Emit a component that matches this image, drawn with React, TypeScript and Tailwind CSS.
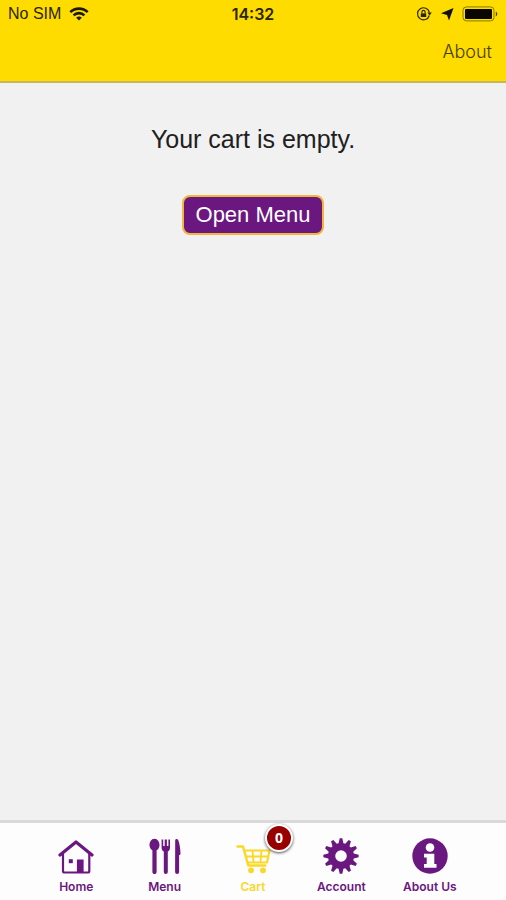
import React from "react";

const PURPLE = "#6a1780";

function gearPath(teeth: number, outer: number, inner: number) {
  const points: string[] = [];
  const step = (Math.PI * 2) / teeth;
  const at = (radius: number, angle: number) =>
    `${(18 + radius * Math.sin(angle)).toFixed(2)} ${(18 - radius * Math.cos(angle)).toFixed(2)}`;
  for (let i = 0; i < teeth; i++) {
    const a = i * step;
    points.push(at(inner, a - step * 0.36));
    points.push(at(outer, a - step * 0.14));
    points.push(at(outer, a + step * 0.14));
    points.push(at(inner, a + step * 0.36));
  }
  return `M${points.join("L")}ZM18 12.200a5.800 5.800 0 1 0 0 11.600a5.800 5.800 0 1 0 0-11.600Z`;
}

function HomeIcon() {
  return (
    <svg className="size-9" viewBox="0 0 36 36" fill="none" stroke={PURPLE} aria-hidden="true">
      <path d="M2 17 18 4 34 17" strokeWidth="3.2" strokeLinecap="round" strokeLinejoin="round" />
      <path d="M5 16V33a1.500 1.500 0 0 0 1.500 1.500H29.800a1.500 1.500 0 0 0 1.500-1.500V16" strokeWidth="2.200" />
      <path d="M19.500 34V22h5.500v12Z" fill={PURPLE} strokeWidth="1.200" />
      <path d="M10.800 21.200h4v4h-4Z" fill={PURPLE} stroke="none" />
    </svg>
  );
}

function MenuIcon() {
  return (
    <svg className="size-9" viewBox="0 0 36 36" fill={PURPLE} aria-hidden="true">
      <path d="M7.500 .8c3.200 0 5 3.200 5 6.200 0 2.500-1.200 4.300-2.900 5.300V34a2.100 2.100 0 0 1-4.200 0V12.300C3.700 11.300 2.500 9.500 2.500 7 2.500 4 4.300 .8 7.500 .8Z" />
      <path d="M14.600 1.500h1.600V8h1.500V1.500h1.200V1.500h1V8h1.500V1.500h1.600V9.700c0 2-1 3.200-2.200 3.800V34a2 2 0 0 1-4 0V13.500c-1.200-.6-2.200-1.800-2.200-3.800Z" />
      <path d="M28.200 1.800c.7-1.300 2.400-1.200 3 .2 1.300 3.300 2.200 9 2.300 13.400 0 1-.6 1.600-1.400 1.800V34a2 2 0 0 1-4 0Z" />
    </svg>
  );
}

function CartIcon() {
  return (
    <svg className="size-9" viewBox="0 0 36 36" fill="none" stroke="#fbd824" aria-hidden="true">
      <path d="M2.500 8.500h5.500L13.300 27.500h17" strokeWidth="2.400" strokeLinecap="round" strokeLinejoin="round" />
      <path d="M9 12.500h25.500l-2.500 12H12.500" strokeWidth="2.200" strokeLinejoin="round" />
      <path d="M10.500 18.500h22.500M17.500 12.500l1 12M26.500 12.500l-1 12" strokeWidth="1.800" />
      <circle cx="16" cy="32.300" r="2.900" fill="#fbd824" stroke="none" />
      <circle cx="28" cy="32.300" r="2.900" fill="#fbd824" stroke="none" />
    </svg>
  );
}

function AccountIcon() {
  return (
    <svg className="size-9" viewBox="0 0 36 36" aria-hidden="true">
      <path d={gearPath(12, 17.7, 13)} fill={PURPLE} fillRule="evenodd" />
    </svg>
  );
}

function AboutIcon() {
  return (
    <svg className="size-9" viewBox="0 0 36 36" aria-hidden="true">
      <circle cx="18" cy="18" r="17.700" fill={PURPLE} />
      <circle cx="18" cy="9.500" r="4.300" fill="#fff" />
      <path d="M12 15.800h10.300V26H24.500v3.800H12V26h2.700v-6.400H12Z" fill="#fff" />
    </svg>
  );
}

const tabs = [
  { label: "Home", Icon: HomeIcon },
  { label: "Menu", Icon: MenuIcon },
  { label: "Cart", Icon: CartIcon, active: true, badge: 0 },
  { label: "Account", Icon: AccountIcon },
  { label: "About Us", Icon: AboutIcon },
];

function StatusBar() {
  return (
    <div className="grid h-7 grid-cols-3 items-center px-2 text-[16px] leading-7 text-[#2b2500]">
      <div className="flex items-center gap-2">
        <span>No SIM</span>
        <svg className="h-[14px] w-5" viewBox="0 0 20 14" fill="none" stroke="#1d1900" strokeWidth="2.600" aria-label="Wi-Fi">
          <path d="M1.300 5.200a12.300 12.300 0 0 1 17.400 0M4.600 8.400a7.600 7.600 0 0 1 10.800 0" />
          <path d="M10 13.600 7.200 10.800a4 4 0 0 1 5.600 0Z" fill="#1d1900" stroke="none" />
        </svg>
      </div>
      <span className="text-center font-['Inter',sans-serif] font-semibold">14:32</span>
      <div className="flex items-center justify-end gap-2">
        <svg className="size-4" viewBox="0 0 16 16" fill="none" stroke="#2b2500" aria-label="Rotation lock">
          <path d="M13.300 9.500A6 6 0 1 1 13.400 6.500" strokeWidth="1.200" />
          <path d="M11.400 6.500h4.400L13.600 9.500Z" fill="#2b2500" stroke="none" />
          <path d="M4.800 7.400h5.400V11H4.800Z" fill="#2b2500" stroke="none" />
          <path d="M5.900 7.500V6a1.600 1.600 0 0 1 3.200 0v1.500" strokeWidth="1.100" />
        </svg>
        <svg className="size-[14px]" viewBox="0 0 14 14" fill="#111" aria-label="Location">
          <path d="M13.500 1 9 13.500 7 8 1 6.300Z" />
        </svg>
        <svg className="h-4 w-9" viewBox="0 0 36 16" aria-label="Battery full">
          <rect x="1" y="0.900" width="31" height="14" rx="3.500" fill="none" stroke="#8a7700" strokeWidth="1" />
          <rect x="3" y="2.900" width="27" height="10" rx="1" fill="#080700" />
          <path d="M33.800 5.500c2 1 2 4 0 5Z" fill="#514600" />
        </svg>
      </div>
    </div>
  );
}

export default function App() {
  return (
    <div className="flex min-h-screen flex-col bg-[#f1f1f1] font-['Liberation_Sans',Arial,sans-serif] text-[#202020]">
      <header className="border-b-2 border-[#c9b45a] bg-[#ffdc00]">
        <StatusBar />
        <div className="flex justify-end px-[14px] pt-[10px] pb-[15px]">
          <a href="#about" className="font-['Inter',sans-serif] text-[18px] leading-7 font-light text-[#4a3f00]">
            About
          </a>
        </div>
      </header>

      <main className="flex flex-1 flex-col items-center pt-10">
        <p className="text-[25px] leading-8">Your cart is empty.</p>
        <button
          type="button"
          className="mt-10 h-10 rounded-lg border-2 border-[#f3b63c] bg-[#6a1780] px-3 text-[22px] leading-8 text-white"
        >
          Open Menu
        </button>
      </main>

      <nav className="flex border-t-[3px] border-[#d9d9d9] bg-[#fdfdfd] px-8 pt-[15px] pb-1">
        {tabs.map(({ label, Icon, active, badge }) => (
          <a
            key={label}
            href={"#" + label.toLowerCase().replace(" ", "-")}
            className={
              "flex flex-1 flex-col items-center gap-1 font-['Inter',sans-serif] text-[12px] leading-[18px] font-semibold whitespace-nowrap " +
              (active ? "text-[#fbd824]" : "text-[#6a1780]")
            }
          >
            <span className="relative">
              <Icon />
              {badge !== undefined && (
                <span className="absolute -top-[14px] left-[30px] flex size-7 items-center justify-center rounded-full border-2 border-white bg-[#980000] font-['Open_Sans',sans-serif] text-[14px] leading-none font-bold text-white shadow-[0_1px_3px_#000000b0]">
                  {badge}
                </span>
              )}
            </span>
            {label}
          </a>
        ))}
      </nav>
    </div>
  );
}
